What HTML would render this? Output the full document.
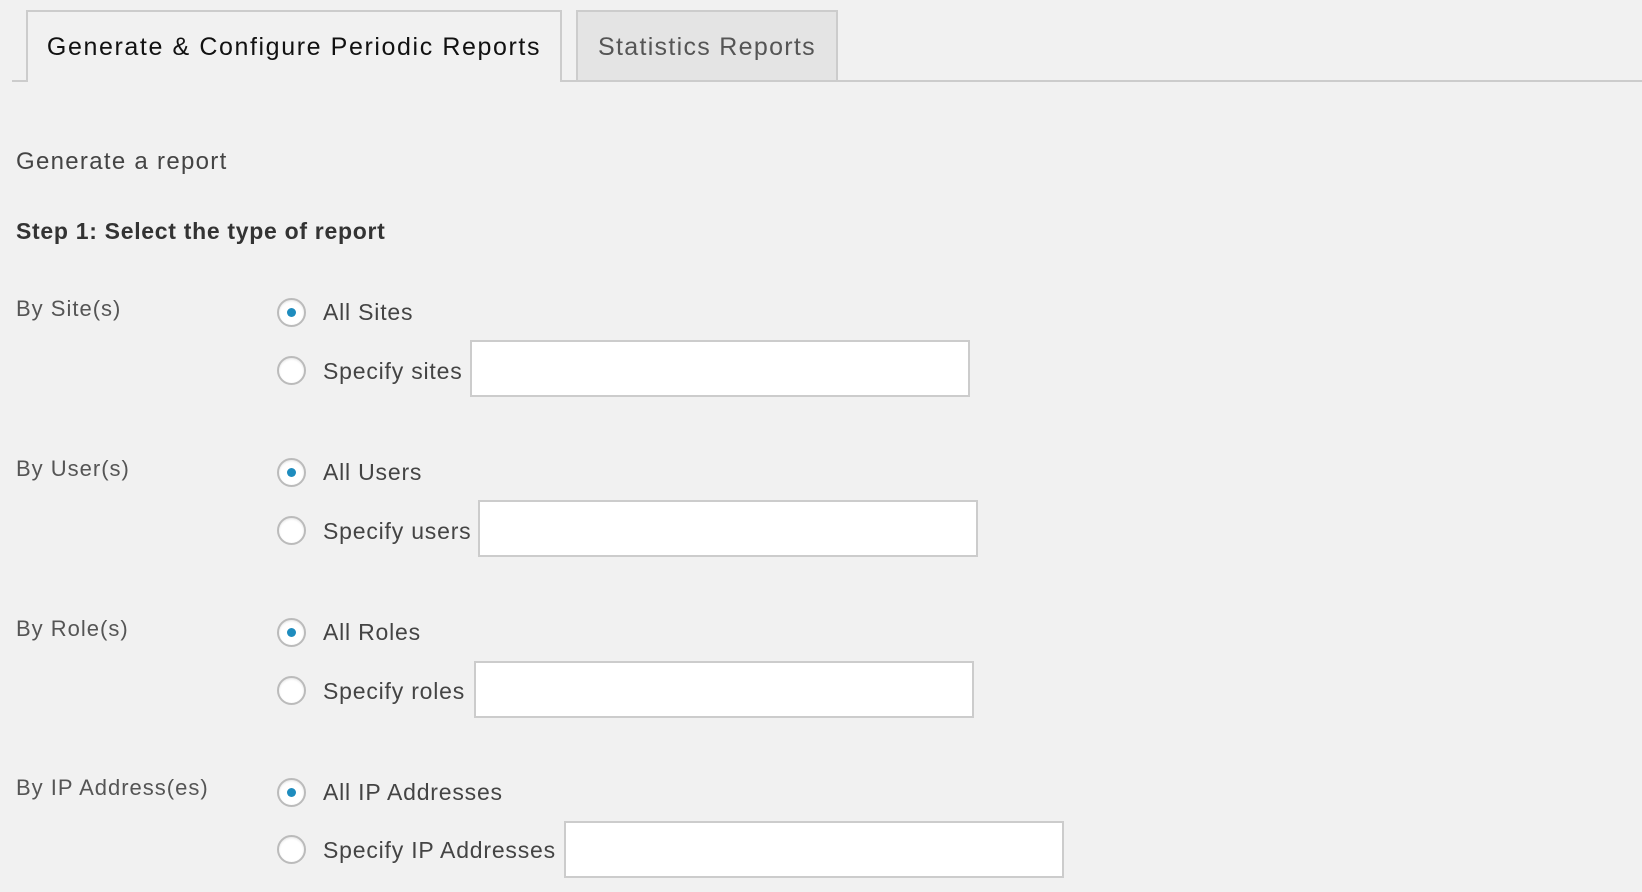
<!DOCTYPE html>
<html><head><style>
body{margin:0;width:1642px;height:892px;background:#f1f1f1;font-family:"Liberation Sans",sans-serif;color:#444;position:relative;overflow:hidden}
.a{position:absolute;white-space:nowrap}
.line{position:absolute;left:12px;right:0;top:80px;height:2px;background:#ccc}
.tab{position:absolute;top:10px;height:70px;border:2px solid #ccc;border-bottom:none;box-sizing:border-box;font-size:25px;line-height:70px;text-align:center}
.t1{left:26px;width:536px;background:#f1f1f1;color:#111;height:72px;z-index:2;letter-spacing:1.6px}
.t2{left:576px;width:262px;background:#e4e4e4;color:#555;letter-spacing:1.3px}
.lbl{font-size:22px;color:#555;letter-spacing:1px}
.r{position:absolute;width:29px;height:29px;border:2px solid #bbb;border-radius:50%;background:#fff;box-sizing:border-box;box-shadow:inset 0 1px 2px rgba(0,0,0,.1)}
.r.on::after{content:"";position:absolute;left:8px;top:8px;width:9px;height:9px;border-radius:50%;background:#1e8cbe}
.in{position:absolute;background:#fff;border:2px solid #ccc;box-sizing:border-box;height:57px}
.opt{font-size:23px;color:#444;letter-spacing:0.8px}
</style></head><body>
<div class="line"></div>
<div class="tab t1">Generate &amp; Configure Periodic Reports</div>
<div class="tab t2">Statistics Reports</div>
<div class="a" style="left:16px;top:148px;font-size:24px;color:#444;letter-spacing:1.3px">Generate a report</div>
<div class="a" style="left:16px;top:218px;font-size:23px;color:#333;font-weight:bold;letter-spacing:0.7px">Step 1: Select the type of report</div>

<div class="a lbl" style="left:16px;top:296px">By Site(s)</div>
<div class="r on" style="left:277px;top:298px"></div>
<div class="a opt" style="left:323px;top:299px">All Sites</div>
<div class="r" style="left:277px;top:356px"></div>
<div class="a opt" style="left:323px;top:358px">Specify sites</div>
<div class="in" style="left:470px;top:340px;width:500px"></div>

<div class="a lbl" style="left:16px;top:456px">By User(s)</div>
<div class="r on" style="left:277px;top:458px"></div>
<div class="a opt" style="left:323px;top:459px">All Users</div>
<div class="r" style="left:277px;top:516px"></div>
<div class="a opt" style="left:323px;top:518px">Specify users</div>
<div class="in" style="left:478px;top:500px;width:500px"></div>

<div class="a lbl" style="left:16px;top:616px">By Role(s)</div>
<div class="r on" style="left:277px;top:618px"></div>
<div class="a opt" style="left:323px;top:619px">All Roles</div>
<div class="r" style="left:277px;top:676px"></div>
<div class="a opt" style="left:323px;top:678px">Specify roles</div>
<div class="in" style="left:474px;top:661px;width:500px"></div>

<div class="a lbl" style="left:16px;top:775px">By IP Address(es)</div>
<div class="r on" style="left:277px;top:778px"></div>
<div class="a opt" style="left:323px;top:779px">All IP Addresses</div>
<div class="r" style="left:277px;top:835px"></div>
<div class="a opt" style="left:323px;top:837px">Specify IP Addresses</div>
<div class="in" style="left:564px;top:821px;width:500px"></div>
</body></html>
